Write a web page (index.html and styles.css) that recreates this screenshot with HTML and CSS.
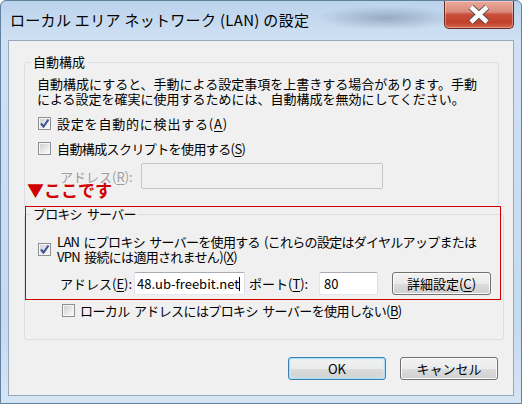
FILE: index.html
```html
<!DOCTYPE html>
<html lang="ja">
<head>
    <meta charset="UTF-8">
    <title>ローカル エリア ネットワーク (LAN) の設定</title>
    <link rel="stylesheet" href="styles.css">
</head>
<body>
    <div class="window">
        <div class="titlebar">
            <span class="title">ローカル エリア ネットワーク (LAN) の設定</span>
            <span class="close">
                <svg width="68" height="27" viewBox="0 0 68 27">
                    <path d="M26 6 L42 21 M42 6 L26 21" stroke="#4a4a4a" stroke-width="6.5" />
                    <path d="M26 6 L42 21 M42 6 L26 21" stroke="#fff" stroke-width="4.5" />
                </svg>
            </span>
        </div>
        <div class="client">
            <fieldset class="group group-auto">
                <legend>自動構成</legend>
                <p class="desc">自動構成にすると、手動による設定事項を上書きする場合があります。手動<br>による設定を確実に使用するためには、自動構成を無効にしてください。</p>
                <div class="check check-first">
                    <span class="cb"><svg width="11" height="11" viewBox="0 0 11 11"><path d="M2 5.5 L4.5 8.5 L9.5 1.5" fill="none" stroke="#3b4f96" stroke-width="2" /></svg></span>
                    <span class="wide">設定を自動的に検出する(<u>A</u>)</span>
                </div>
                <div class="check">
                    <span class="cb"></span>
                    <span class="narrow">自動構成スクリプトを使用する(<u>S</u>)</span>
                </div>
                <div class="row row-script">
                    <span class="lbl lbl-script disabled">アドレス(<u>R</u>):</span>
                    <span class="field field-disabled"></span>
                </div>
            </fieldset>

            <fieldset class="group group-proxy">
                <legend>プロキシ サーバー</legend>
                <div class="check check-lan">
                    <span class="cb"><svg width="11" height="11" viewBox="0 0 11 11"><path d="M2 5.5 L4.5 8.5 L9.5 1.5" fill="none" stroke="#3b4f96" stroke-width="2" /></svg></span>
                    <span class="narrow lan">LAN にプロキシ サーバーを使用する (これらの設定はダイヤルアップまたは<br>VPN 接続には適用されません)(<u>X</u>)</span>
                </div>
                <div class="row row-proxy">
                    <span class="lbl lbl-addr">アドレス(<u>E</u>):</span>
                    <span class="field field-addr">48.ub-freebit.net<i class="caret"></i></span>
                    <span class="lbl lbl-port">ポート(<u>T</u>):</span>
                    <span class="field field-port">80</span>
                    <span class="btn btn-adv">詳細設定(<u>C</u>)</span>
                </div>
                <div class="check check-local">
                    <span class="cb"></span>
                    <span class="narrow">ローカル アドレスにはプロキシ サーバーを使用しない(<u>B</u>)</span>
                </div>
            </fieldset>

            <div class="buttons">
                <span class="btn btn-default">OK</span>
                <span class="btn">キャンセル</span>
            </div>

            <!-- 注釈 -->
            <div class="mark-box"></div>
            <div class="mark-text">▼ここです</div>
        </div>
    </div>
</body>
</html>
```

FILE: styles.css
```css
* {
    margin: 0;
    padding: 0;
    box-sizing: border-box;
}
body {
    font-family: "Noto Sans CJK JP", "Noto Sans", sans-serif;
    font-size: 13px;
    color: #000;
    background: #fff;
}
u {
    text-underline-offset: 2px;
}
.window {
    width: 522px;
    height: 404px;
    border: 1px solid #62809f;
    border-radius: 6px 6px 0 0;
    padding: 0 7px 7px;
    background:
        radial-gradient(ellipse 70px 12px at 385px 17px, rgba(95, 115, 140, 0.45), rgba(95, 115, 140, 0)),
        linear-gradient(#bcd3ec, #d0e1f3 40px, #c6daef 80%, #d6e5f4);
}
.titlebar {
    height: 39px;
    display: flex;
    justify-content: space-between;
    align-items: flex-start;
}
.title {
    font-size: 15px;
    line-height: 20px;
    margin: 9px 0 0 2px;
    letter-spacing: 0.3px;
    white-space: nowrap;
}
.close {
    width: 70px;
    height: 28px;
    display: flex;
    align-items: center;
    justify-content: center;
    border: 1px solid #6b2a20;
    border-top: none;
    border-radius: 0 0 5px 5px;
    background: linear-gradient(#e9aa9d 0%, #d98a7b 40%, #c9503c 50%, #c0402a 80%, #d56a50 100%);
    box-shadow: inset 0 0 0 1px rgba(255, 255, 255, 0.35);
}
.client {
    position: relative;
    height: 356px;
    border: 1px solid #96a9c1;
    background: #f0f0f0;
    padding: 0 14px 0 15px;
}
.group {
    border: 1px solid #d5dfe5;
    border-radius: 3px;
    padding: 0 12px 17px;
}
.group legend {
    margin-left: -6px;
    padding: 0 2px;
    line-height: 16px;
}
.group-auto {
    margin-top: 13px;
}
.group-proxy {
    padding-bottom: 21px;
}
.group-proxy legend {
    line-height: 14px;
    letter-spacing: -0.8px;
    word-spacing: 3px;
}
.desc {
    margin-top: 6px;
    line-height: 15px;
    white-space: nowrap;
}
.check {
    display: flex;
    align-items: center;
    gap: 6px;
    height: 17px;
    margin-top: 8px;
    margin-left: 1px;
    white-space: nowrap;
}
.check-first {
    margin-top: 9px;
}
.check-lan {
    height: 30px;
    line-height: 15px;
    margin-top: 13px;
}
.check-local {
    height: 16px;
    margin-top: 7px;
    margin-left: 25px;
    gap: 5px;
}
.wide {
    letter-spacing: 0.8px;
}
.narrow {
    letter-spacing: -0.6px;
    word-spacing: 2px;
}
.lan {
    letter-spacing: -0.7px;
}
.cb {
    width: 13px;
    height: 13px;
    flex: none;
    display: flex;
    align-items: center;
    justify-content: center;
    border: 1px solid #8e8f8f;
    background: linear-gradient(135deg, #c9ccd0, #f4f4f4 80%);
    box-shadow: inset 0 0 0 1px #f6f6f6;
}
.row {
    display: flex;
    align-items: center;
    white-space: nowrap;
}
.row-script {
    margin-top: 6px;
}
.row-proxy {
    margin-top: 8px;
}
.lbl {
    flex: none;
}
.lbl-script {
    width: 81px;
    margin-left: 23px;
}
.lbl-addr {
    width: 74px;
    margin-left: 23px;
}
.lbl-port {
    width: 70px;
    margin-left: 4px;
}
.disabled {
    color: #9d9d9d;
}
.field {
    display: block;
    height: 23px;
    border: 1px solid;
    border-color: #abadb3 #dbdfe6 #e3e9ef #e2e3ea;
    border-radius: 2px;
    background: #fff;
    padding: 0 2px;
    line-height: 21px;
    overflow: hidden;
}
.field-disabled {
    width: 242px;
    height: 26px;
    border-color: #c5c5c5;
    background: #f0f0f0;
}
.field-addr {
    width: 111px;
}
.field-port {
    width: 59px;
    padding-left: 4px;
}
.caret {
    display: inline-block;
    width: 1px;
    height: 14px;
    background: #000;
    vertical-align: -2px;
}
.btn {
    display: flex;
    align-items: center;
    justify-content: center;
    height: 23px;
    width: 98px;
    border: 1px solid #707070;
    border-radius: 3px;
    background: linear-gradient(#f2f2f2 0%, #ebebeb 50%, #dddddd 52%, #cfcfcf 100%);
    box-shadow: inset 0 0 0 1px #fbfbfb;
    white-space: nowrap;
}
.btn-adv {
    width: 99px;
    margin-left: 14px;
}
.btn-default {
    border-color: #3c7fb1;
    box-shadow: inset 0 0 0 1px #a6e2f8, inset 0 0 3px 1px #cdeefa;
}
.buttons {
    display: flex;
    justify-content: flex-end;
    gap: 14px;
    margin-top: 17px;
    padding-right: 1px;
}
.mark-box {
    position: absolute;
    left: 16px;
    top: 165px;
    width: 476px;
    height: 94px;
    border: 1px solid #cc0000;
}
.mark-text {
    position: absolute;
    left: 18px;
    top: 140px;
    font-size: 17px;
    line-height: 17px;
    font-weight: bold;
    color: #d10000;
    white-space: nowrap;
}
```
